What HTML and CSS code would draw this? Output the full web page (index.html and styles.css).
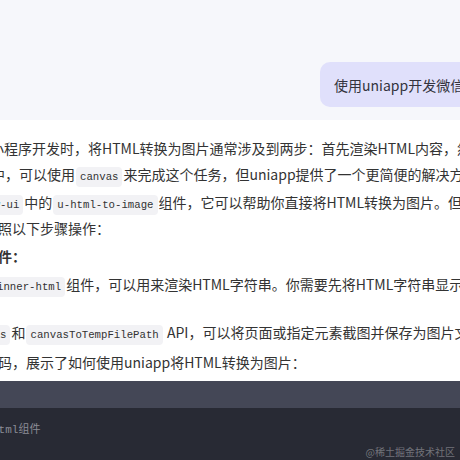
FILE: index.html
```html
<!DOCTYPE html>
<html lang="zh-CN">
<head>
<meta charset="utf-8">
<link rel="stylesheet" href="styles.css">
</head>
<body>
<div class="page">
  <div class="user-area">
    <div class="bubble">使用uniapp开发微信小程序，如何将html转换为图片</div>
  </div>
  <div class="answer">
    <div class="ln l1">小程序开发时，将HTML转换为图片通常涉及到两步：首先渲染HTML内容，然后将其转换为图片。</div>
    <div class="ln l2">中，可以使用<code>canvas</code>来完成这个任务，但uniapp提供了一个更简便的解决方案。</div>
    <div class="ln l3 gap"><code>uview-ui</code>中的<code>u-html-to-image</code>组件，它可以帮助你直接将HTML转换为图片。但是</div>
    <div class="ln l4">按照以下步骤操作：</div>
    <div class="ln l5 gap">件：</div>
    <div class="ln l6 gap"><code>inner-html</code>组件，可以用来渲染HTML字符串。你需要先将HTML字符串显示在页面上。</div>
    <div class="ln l8"><code>canvas</code>和<code>canvasToTempFilePath</code> API，可以将页面或指定元素截图并保存为图片文件。</div>
    <div class="ln l9">码，展示了如何使用uniapp将HTML转换为图片：</div>
  </div>
  <div class="codeblock">
    <div class="code-head"></div>
    <div class="code-body">
      <div class="comment">html组件</div>
    </div>
    <div class="watermark">@稀土掘金技术社区</div>
  </div>
</div>
</body>
</html>
```

FILE: styles.css
```css
* { box-sizing: border-box; }
html, body {
  margin: 0;
  padding: 0;
  background: #ffffff;
}
body {
  font-family: "Noto Sans CJK SC", "Noto Sans", sans-serif;
  font-size: 14px;
  color: #333333;
}
.page {
  width: 460px;
  height: 460px;
  overflow: hidden;
  display: flex;
  flex-direction: column;
}
.user-area {
  flex: none;
  height: 120px;
  background: #f6f7fb;
  padding: 62px 0 0 320px;
  display: flex;
}
.bubble {
  flex: none;
  height: 45px;
  padding: 0 14px;
  display: flex;
  align-items: center;
  white-space: nowrap;
  background: #e0e0fb;
  border-radius: 10px;
  color: #33333d;
}
.answer {
  flex: none;
  padding-top: 15px;
  display: flex;
  flex-direction: column;
}
.ln {
  white-space: nowrap;
  height: 26px;
  line-height: 26px;
}
.gap { margin-top: 2px; }
.l1 { margin-left: -10px; }
.l2 { margin-left: -9px; }
.l3 { margin-left: -37px; }
.l4 { margin-left: -16px; }
.l5 { margin-left: -2px; font-weight: 600; }
.l6 { margin-left: -8px; }
.l8 { margin-left: -37px; margin-top: 22px; }
.l9 { margin-left: -2px; margin-top: 4px; }
code {
  font-family: "Liberation Mono", "DejaVu Sans Mono", monospace;
  font-size: 10.7px;
  background: #f2f2f5;
  border-radius: 4px;
  padding: 4px 4px;
  margin: 0 1px;
  color: #333333;
}
.codeblock {
  flex: none;
  margin-top: 6px;
  height: 80px;
  position: relative;
  display: flex;
  flex-direction: column;
}
.code-head {
  flex: none;
  height: 27px;
  background: #444756;
}
.code-body {
  flex: 1;
  background: #282a34;
  padding: 14px 0 0 0;
}
.comment {
  margin-left: -8px;
  font-family: "Liberation Mono", "Noto Sans CJK SC", monospace;
  font-size: 11px;
  line-height: 16px;
  color: #8b8c96;
  white-space: nowrap;
}
.watermark {
  position: absolute;
  right: 5px;
  bottom: 3px;
  font-size: 10px;
  line-height: 12px;
  color: rgba(255, 255, 255, 0.35);
  white-space: nowrap;
}
```
